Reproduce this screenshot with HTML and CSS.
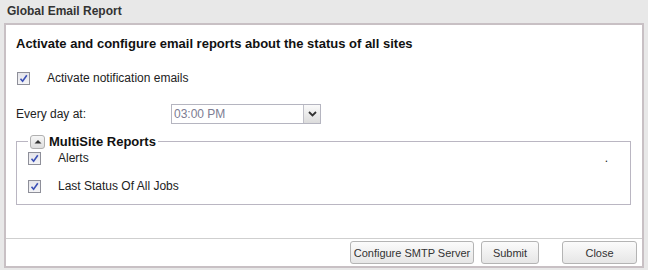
FILE: index.html
```html
<!DOCTYPE html>
<html>
<head>
<meta charset="utf-8">
<link rel="stylesheet" href="styles.css">
</head>
<body>
<div class="dialog">
  <div class="title">Global Email Report</div>
  <div class="panel">
    <div class="content">
      <div class="heading">Activate and configure email reports about the status of all sites</div>
      <div class="row row-activate">
        <span class="cb"><svg width="9" height="9" viewBox="0 0 9 9"><path d="M1.5 4.8 L3.6 7.2 L7.8 1.2" fill="none" stroke="#3a4fb5" stroke-width="1.6"/></svg></span>
        <span class="label">Activate notification emails</span>
      </div>
      <div class="row row-time">
        <span class="time-label">Every day at:</span>
        <div class="select">
          <span class="select-value">03:00 PM</span>
          <span class="select-btn"><svg width="9" height="6" viewBox="0 0 9 6"><path d="M1 1 L4.5 4.5 L8 1" fill="none" stroke="#333" stroke-width="1.8"/></svg></span>
        </div>
      </div>
      <fieldset class="group">
        <legend class="group-legend">
          <span class="toggle"><svg width="8" height="5" viewBox="0 0 8 5"><path d="M0.5 4.5 L4 1 L7.5 4.5 Z" fill="#333"/></svg></span>
          <span class="legend-text">MultiSite Reports</span>
        </legend>
        <div class="row row-alerts">
          <span class="cb"><svg width="9" height="9" viewBox="0 0 9 9"><path d="M1.5 4.8 L3.6 7.2 L7.8 1.2" fill="none" stroke="#3a4fb5" stroke-width="1.6"/></svg></span>
          <span class="label">Alerts</span>
          <span class="dot">.</span>
        </div>
        <div class="row row-jobs">
          <span class="cb"><svg width="9" height="9" viewBox="0 0 9 9"><path d="M1.5 4.8 L3.6 7.2 L7.8 1.2" fill="none" stroke="#3a4fb5" stroke-width="1.6"/></svg></span>
          <span class="label">Last Status Of All Jobs</span>
        </div>
      </fieldset>
    </div>
    <div class="footer">
      <button class="btn btn-smtp">Configure SMTP Server</button>
      <button class="btn btn-submit">Submit</button>
      <button class="btn btn-close">Close</button>
    </div>
  </div>
</div>
</body>
</html>
```

FILE: styles.css
```css
html, body {
  margin: 0;
  padding: 0;
}
body {
  background: #e8e8e8;
  font-family: "Liberation Sans", Arial, sans-serif;
  font-size: 12px;
  color: #222;
}
.dialog {
  width: 648px;
  height: 270px;
  display: flex;
  flex-direction: column;
}
.title {
  height: 23px;
  line-height: 22px;
  padding-left: 7px;
  font-weight: bold;
  font-size: 12px;
  color: #333;
}
.panel {
  margin: 0 4px 2px 4px;
  flex: 1;
  background: #fff;
  border: 2px solid #c8c0c4;
  display: flex;
  flex-direction: column;
}
.content {
  height: 213px;
  border-bottom: 1px solid #cfcfcf;
  padding: 0 10px 0 10px;
}
.heading {
  margin-top: 10px;
  height: 18px;
  line-height: 18px;
  font-size: 13px;
  font-weight: bold;
  color: #111;
}
.row {
  display: flex;
  align-items: center;
}
.row-activate {
  margin-top: 17px;
  height: 16px;
  padding-left: 1px;
}
.cb {
  width: 11px;
  height: 11px;
  border: 1px solid #8e8f99;
  background: linear-gradient(#e4e4ea, #f4f4f6);
  display: flex;
  align-items: center;
  justify-content: center;
  flex: none;
}
.label {
  margin-left: 17px;
}
.row-time {
  margin-top: 18px;
  height: 20px;
}
.time-label {
  width: 155px;
}
.select {
  width: 148px;
  height: 18px;
  border: 1px solid #b5b5c0;
  display: flex;
}
.select-value {
  flex: 1;
  line-height: 18px;
  padding-left: 2px;
  color: #7c7c92;
}
.select-btn {
  width: 16px;
  border-left: 1px solid #c0c0c8;
  background: linear-gradient(#fafafa, #dcdcdc);
  display: flex;
  align-items: center;
  justify-content: center;
}
.group {
  margin: 10px 1px 0 0;
  border: 1px solid #bab6c2;
  padding: 0 0 10px 11px;
}
.group-legend {
  padding: 0 2px;
  margin-left: 0;
  display: flex;
  align-items: center;
}
.toggle {
  width: 13px;
  height: 12px;
  border: 1px solid #b0b0b0;
  border-radius: 3px;
  background: linear-gradient(#f6f6f6, #dedede);
  display: inline-flex;
  align-items: center;
  justify-content: center;
  margin-right: 4px;
}
.legend-text {
  font-weight: bold;
  font-size: 13px;
  color: #111;
}
.row-alerts {
  height: 16px;
  margin-top: 1px;
}
.dot {
  margin-left: auto;
  margin-right: 22px;
}
.row-jobs {
  height: 16px;
  margin-top: 12px;
}
.footer {
  flex: 1;
  display: flex;
  justify-content: flex-end;
  align-items: center;
  padding-right: 5px;
}
.btn {
  height: 23px;
  border: 1px solid #b4b4b4;
  border-radius: 3px;
  background: linear-gradient(#fbfbfb, #e6e6e6);
  font-family: "Liberation Sans", Arial, sans-serif;
  font-size: 11px;
  color: #333;
  padding: 0;
  margin: 0;
}
.btn-smtp { width: 124px; }
.btn-submit { width: 58px; margin-left: 7px; }
.btn-close { width: 75px; margin-left: 23px; }
```
